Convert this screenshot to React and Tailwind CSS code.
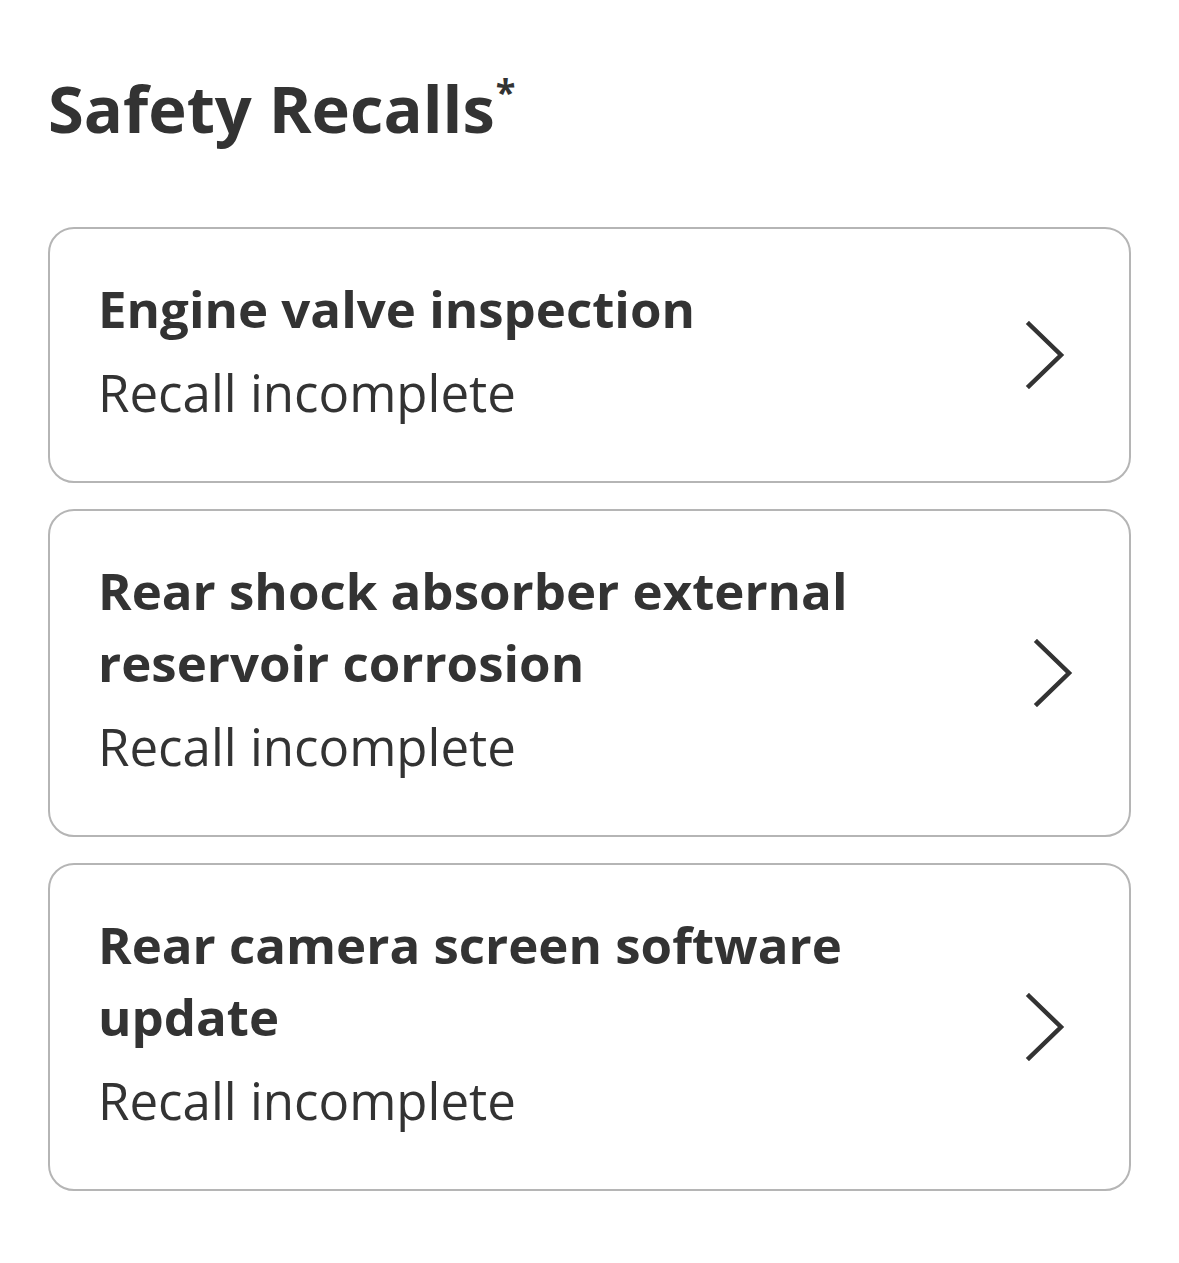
import React from 'react';

const recalls = [
  { title: 'Engine valve inspection', status: 'Recall incomplete', shift: 'pr-[64px]' },
  { title: 'Rear shock absorber external reservoir corrosion', status: 'Recall incomplete', shift: 'pr-[56px]' },
  { title: 'Rear camera screen software update', status: 'Recall incomplete', shift: 'pr-[64px]' },
];

const Chevron = () => (
  <svg width="40" height="68" viewBox="0 0 40 68" fill="none" className="shrink-0 mt-[10px]">
    <path d="M4 3 L36 34 L4 65" stroke="#333333" strokeWidth="4.5" strokeLinecap="square" strokeLinejoin="miter" />
  </svg>
);

const RecallCard = ({ title, status, shift }) => (
  <div className={`flex items-center justify-between rounded-[26px] border-2 border-[#b5b5b5] bg-white pl-[48px] pt-[43px] pb-[53px] ${shift}`}>
    <div className="flex flex-col gap-[12px] max-w-[780px]">
      <div className="text-[51px] leading-[72px] font-bold text-[#333333]">{title}</div>
      <div className="text-[51px] leading-[72px] text-[#333333]">{status}</div>
    </div>
    <Chevron />
  </div>
);

export default function App() {
  return (
    <div
      className="min-h-screen bg-white px-[48px] pt-[68px]"
      style={{ fontFamily: '"Open Sans", "Noto Sans", sans-serif' }}
    >
      <h1 className="text-[65px] leading-[80px] font-bold text-[#333333]">
        Safety Recalls<span className="relative top-[-28px] ml-[1px] text-[36px] leading-none">*</span>
      </h1>
      <div className="mt-[79px] flex flex-col gap-[26px]">
        {recalls.map((r) => (
          <RecallCard key={r.title} {...r} />
        ))}
      </div>
    </div>
  );
}
